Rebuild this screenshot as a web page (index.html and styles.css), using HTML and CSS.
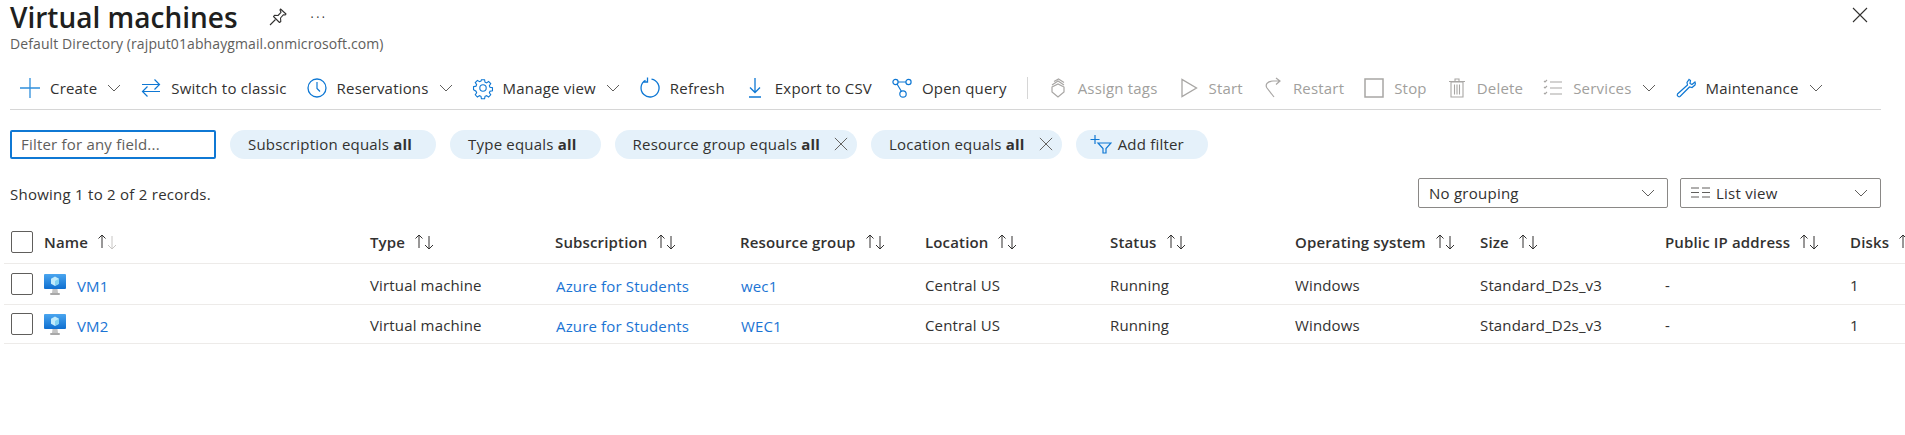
FILE: index.html
```html
<!DOCTYPE html>
<html lang="en">
<head>
    <meta charset="UTF-8">
    <meta name="viewport" content="width=device-width, initial-scale=1.0">
    <title>Virtual machines</title>
    <link rel="stylesheet" href="styles.css">
</head>
<body>

    <svg class="defs" aria-hidden="true">
        <defs>
            <linearGradient id="vmblue" x1="0" y1="0" x2="0" y2="1">
                <stop offset="0" stop-color="#4aa5ef"/>
                <stop offset="1" stop-color="#0f6fd0"/>
            </linearGradient>
        </defs>
        <symbol id="chev" viewBox="0 0 14 14"><path d="M1 4l6 6 6-6" fill="none" stroke="currentColor" stroke-width="1"/></symbol>
        <symbol id="cross" viewBox="0 0 16 16"><path d="M1 1l14 14M15 1L1 15" fill="none" stroke="currentColor" stroke-width="1.1"/></symbol>
        <symbol id="sort" viewBox="0 0 22 18">
            <path d="M5 15V2M1.500 5.500L5 2l3.500 3.500" fill="none" stroke="#323130" stroke-width="1"/>
            <path d="M15 3v13M11 12l4 4 4-4" fill="none" stroke="currentColor" stroke-width="1"/>
        </symbol>
        <symbol id="vm" viewBox="0 0 22 22">
            <rect x="0" y="0" width="22" height="15" rx="1" fill="url(#vmblue)"/>
            <path d="M11 2.500l4 2.200v5L11 12l-4-2.300v-5z" fill="#c2ebfb"/>
            <path d="M11 7l4-2.300v5L11 12z" fill="#83d3f3"/>
            <path d="M8.500 15h5l.5 4h-6z" fill="#c4c4c4"/>
            <rect x="6" y="19" width="10" height="2" rx="1" fill="#a8a8a8"/>
        </symbol>
    </svg>

    <header class="page-head">
        <div class="title-block">
            <div class="title-line">
                <h1>Virtual machines</h1>
                <svg class="pin" viewBox="0 0 18 18"><path d="M11.500 1l5.500 5-1 1-1.500-.3-3 3.300.3 3.500-1.300 1-6-6 1-1.200 3.500.2 3-3.200L11 2z" fill="none" stroke="#323130" stroke-width="1.100" stroke-linejoin="round"/><path d="M6.500 11.500L1 17" fill="none" stroke="#323130" stroke-width="1.100"/></svg>
                <span class="more">&middot;&middot;&middot;</span>
            </div>
            <p class="subtitle">Default Directory (rajput01abhaygmail.onmicrosoft.com)</p>
        </div>
        <svg class="close"><use href="#cross"/></svg>
    </header>

    <nav class="toolbar">
        <button class="tool">
            <svg class="icon" viewBox="0 0 20 20"><path d="M10 0v20M0 10h20" fill="none" stroke="#2f8fdc" stroke-width="1.300"/></svg>
            Create
            <svg class="chev"><use href="#chev"/></svg>
        </button>
        <button class="tool">
            <svg class="icon" viewBox="0 0 20 20"><path d="M1 6.500h17M13.500 1.500l5 5-5 5M19 13.500H2M6.500 8.500l-5 5 5 5" fill="none" stroke="#0f78d4" stroke-width="1.200"/></svg>
            Switch to classic
        </button>
        <button class="tool">
            <svg class="icon" viewBox="0 0 20 20"><circle cx="10" cy="10" r="9" fill="none" stroke="#0f78d4" stroke-width="1.300"/><path d="M10 4v6.500l3 3" fill="none" stroke="#0f78d4" stroke-width="1.200"/></svg>
            Reservations
            <svg class="chev"><use href="#chev"/></svg>
        </button>
        <button class="tool">
            <svg class="icon" viewBox="0 0 20 20"><circle cx="10" cy="10" r="3.200" fill="none" stroke="#0f78d4" stroke-width="1.100"/><path d="M8.300 1h3.400l.5 2.700 1.600.7 2.300-1.500 2.300 2.400-1.500 2.200.7 1.700 2.700.5v3.300l-2.700.5-.7 1.700 1.500 2.200-2.300 2.400-2.300-1.500-1.600.7-.5 2.700H8.300l-.5-2.700-1.600-.7-2.300 1.500-2.300-2.400 1.500-2.200-.7-1.700L-.3 11.800V8.500l2.700-.5.7-1.700-1.500-2.200 2.300-2.400 2.300 1.500 1.600-.7z" transform="translate(.8 .8) scale(.92)" fill="none" stroke="#0f78d4" stroke-width="1.200"/></svg>
            Manage view
            <svg class="chev"><use href="#chev"/></svg>
        </button>
        <button class="tool">
            <svg class="icon" viewBox="0 0 20 20"><path d="M11.500 1.100A9 9 0 1 1 5.500 2.200M7.500 -.5v4.500H3" fill="none" stroke="#0f78d4" stroke-width="1.300"/></svg>
            Refresh
        </button>
        <button class="tool">
            <svg class="icon" viewBox="0 0 20 20"><path d="M10 0v14M5 9.500l5 5 5-5M4 19h12" fill="none" stroke="#0f78d4" stroke-width="1.300"/></svg>
            Export to CSV
        </button>
        <button class="tool">
            <svg class="icon" viewBox="0 0 20 20"><g fill="none" stroke="#0f78d4" stroke-width="1.200"><circle cx="3.500" cy="4" r="2.600"/><circle cx="16.500" cy="4" r="2.600"/><circle cx="11" cy="16" r="3.200"/><path d="M6 4h8M5 6l4.500 7.500"/></g></svg>
            Open query
        </button>
        <span class="tool-sep"></span>
        <button class="tool off">
            <svg class="icon" viewBox="0 0 20 20"><path d="M4 9l6-3 6 3v5l-6 5-6-5zM4 7l6-4 6 4M6 3.500L10.500 1 16 4.500" fill="none" stroke="#a8a6a4" stroke-width="1.200"/></svg>
            Assign tags
        </button>
        <button class="tool off tool-wide">
            <svg class="icon" viewBox="0 0 20 20"><path d="M3 1.500v17L17.500 10z" fill="none" stroke="#a8a6a4" stroke-width="1.300"/></svg>
            Start
        </button>
        <button class="tool off">
            <svg class="icon" viewBox="0 0 20 20"><path d="M11 19L4 10c-2-3 0-7 6-7h6M13 0l4 3-4 3.500" fill="none" stroke="#a8a6a4" stroke-width="1.200"/></svg>
            Restart
        </button>
        <button class="tool off">
            <svg class="icon" viewBox="0 0 20 20"><rect x="1" y="1" width="18" height="18" fill="none" stroke="#a8a6a4" stroke-width="1.500"/></svg>
            Stop
        </button>
        <button class="tool off">
            <svg class="icon" viewBox="0 0 20 20"><path d="M4 4h12v15H4zM2 3.500h16M8 3V1h4v2M7.500 6.500v10M10 6.500v10M12.500 6.500v10" fill="none" stroke="#a8a6a4" stroke-width="1.100"/></svg>
            Delete
        </button>
        <button class="tool off">
            <svg class="icon" viewBox="0 0 20 20"><path d="M7 4h12M7 10h12M7 16h12M1 3l1 1 2-2M1 9l1 1 2-2M1 15l1 1 2-2" fill="none" stroke="#a8a6a4" stroke-width="1.100"/></svg>
            Services
            <svg class="chev"><use href="#chev"/></svg>
        </button>
        <button class="tool">
            <svg class="icon" viewBox="0 0 20 20"><path d="M13 1.500l-2 3 .500 2.500L1.500 16c-1 1.500 1 3.500 2.500 2.500L13.500 9l2.500.5 3-2.500c.500-1 .500-2 0-3l-3 2.500-2-1 .500-3c-.500-.500-1-.500-1.500-1z" fill="none" stroke="#0f78d4" stroke-width="1.200"/></svg>
            Maintenance
            <svg class="chev"><use href="#chev"/></svg>
        </button>
    </nav>

    <section class="filters">
        <input class="filter-input" type="text" placeholder="Filter for any field...">
        <span class="pill">Subscription equals <b>all</b></span>
        <span class="pill">Type equals <b>all</b></span>
        <span class="pill pill-x">Resource group equals <b>all</b><svg class="x"><use href="#cross"/></svg></span>
        <span class="pill pill-x">Location equals <b>all</b><svg class="x"><use href="#cross"/></svg></span>
        <span class="pill pill-add"><svg class="add-icon" viewBox="0 0 22 20"><path d="M5 1v9M.5 5.500h9M8 9h13l-5 5.500V19h-3v-4.500z" fill="none" stroke="#0f78d4" stroke-width="1.200"/></svg>Add filter</span>
    </section>

    <section class="summary">
        <span class="records">Showing 1 to 2 of 2 records.</span>
        <div class="selects">
            <div class="select select-group">No grouping<svg class="chev"><use href="#chev"/></svg></div>
            <div class="select select-view">
                <span class="select-label">
                    <svg class="list-icon" viewBox="0 0 20 12"><path d="M0 1h8M0 5.500h8M0 10h8M11 1h8M11 5.500h8M11 10h8" fill="none" stroke="#605e5c" stroke-width="1"/></svg>
                    List view
                </span>
                <svg class="chev"><use href="#chev"/></svg>
            </div>
        </div>
    </section>

    <div class="grid">
        <div class="row row-head">
            <span class="check"></span>
            <span class="col">Name<svg class="sort name-sort"><use href="#sort"/></svg></span>
            <span class="col">Type<svg class="sort"><use href="#sort"/></svg></span>
            <span class="col">Subscription<svg class="sort"><use href="#sort"/></svg></span>
            <span class="col">Resource group<svg class="sort"><use href="#sort"/></svg></span>
            <span class="col">Location<svg class="sort"><use href="#sort"/></svg></span>
            <span class="col">Status<svg class="sort"><use href="#sort"/></svg></span>
            <span class="col">Operating system<svg class="sort"><use href="#sort"/></svg></span>
            <span class="col">Size<svg class="sort"><use href="#sort"/></svg></span>
            <span class="col">Public IP address<svg class="sort"><use href="#sort"/></svg></span>
            <span class="col">Disks<svg class="sort"><use href="#sort"/></svg></span>
        </div>
        <div class="row row-body">
            <span class="check"></span>
            <span class="col"><svg class="vm"><use href="#vm"/></svg><a class="vm-link" href="#">VM1</a></span>
            <span class="col">Virtual machine</span>
            <span class="col"><a href="#">Azure for Students</a></span>
            <span class="col"><a href="#">wec1</a></span>
            <span class="col">Central US</span>
            <span class="col">Running</span>
            <span class="col">Windows</span>
            <span class="col">Standard_D2s_v3</span>
            <span class="col">-</span>
            <span class="col">1</span>
        </div>
        <div class="row row-body row-last">
            <span class="check"></span>
            <span class="col"><svg class="vm"><use href="#vm"/></svg><a class="vm-link" href="#">VM2</a></span>
            <span class="col">Virtual machine</span>
            <span class="col"><a href="#">Azure for Students</a></span>
            <span class="col"><a href="#">WEC1</a></span>
            <span class="col">Central US</span>
            <span class="col">Running</span>
            <span class="col">Windows</span>
            <span class="col">Standard_D2s_v3</span>
            <span class="col">-</span>
            <span class="col">1</span>
        </div>
    </div>

</body>
</html>
```

FILE: styles.css
```css
body {
    margin: 0;
    height: 435px;
    overflow: hidden;
    background: white;
    color: #323130;
    font-family: "Open Sans", "Noto Sans", sans-serif;
    font-size: 15px;
    letter-spacing: .25px;
}

.defs {
    display: block;
    width: 0;
    height: 0;
}

/* title area */
.page-head {
    display: flex;
    justify-content: space-between;
    padding: 0 37px 0 10px;
    height: 71px;
}

.title-line {
    display: flex;
    align-items: center;
    height: 34px;
}

h1 {
    margin: 0;
    font-size: 28px;
    line-height: 34px;
    font-weight: 600;
    letter-spacing: 0;
    color: #201f1e;
}

.pin {
    width: 18px;
    height: 18px;
    margin-left: 31px;
}

.more {
    margin-left: 24px;
    font-size: 12px;
    letter-spacing: 2.500px;
}

.subtitle {
    margin: 0;
    font-size: 14px;
    letter-spacing: .1px;
    color: #605e5c;
}

.close {
    width: 16px;
    height: 16px;
    margin-top: 7px;
}

/* toolbar */
.toolbar {
    display: flex;
    align-items: center;
    gap: 20px;
    height: 34px;
    margin: 0 24px 0 10px;
    padding: 0 0 4px 10px;
    border-bottom: 1px solid #d6d6d6;
    letter-spacing: .19px;
}

.tool {
    display: flex;
    align-items: center;
    gap: 10px;
    padding: 0;
    border: none;
    background: none;
    color: #323130;
    font: inherit;
    letter-spacing: inherit;
    white-space: nowrap;
}

.tool.off {
    color: #a19f9d;
}

.tool-wide {
    margin-left: 1px;
}

.icon {
    width: 20px;
    height: 20px;
    overflow: visible;
}

.chev {
    width: 14px;
    height: 14px;
    color: #605e5c;
}

.tool-sep {
    width: 1px;
    height: 22px;
    background: #d6d6d6;
}

/* filter pills */
.filters {
    display: flex;
    align-items: center;
    gap: 14px;
    margin: 20px 0 0 10px;
    letter-spacing: .2px;
}

.filter-input {
    box-sizing: border-box;
    width: 206px;
    height: 29px;
    padding: 0 9px 2px;
    border: 2px solid #0f78d4;
    border-radius: 2px;
    outline: none;
    font: inherit;
    letter-spacing: inherit;
}

.filter-input::placeholder {
    color: #605e5c;
}

.pill {
    box-sizing: border-box;
    display: flex;
    align-items: center;
    height: 29px;
    padding: 0 24px 2px 18px;
    border-radius: 15px;
    background: #e5f1fa;
    white-space: pre;
}

.pill b {
    font-weight: 700;
}

.pill-x {
    padding-right: 9px;
}

.x {
    width: 14px;
    height: 14px;
    margin-left: 14px;
    color: #605e5c;
}

.pill-add {
    padding-left: 14px;
}

.add-icon {
    width: 22px;
    height: 20px;
    margin-right: 6px;
}

/* records line and dropdowns */
.summary {
    display: flex;
    justify-content: space-between;
    align-items: center;
    margin: 19px 24px 0 10px;
}

.records {
    padding-top: 2px;
}

.selects {
    display: flex;
    gap: 12px;
}

.select {
    box-sizing: border-box;
    display: flex;
    justify-content: space-between;
    align-items: center;
    height: 30px;
    padding: 0 12px 0 10px;
    border: 1px solid #8a8886;
    border-radius: 2px;
}

.select-group {
    width: 250px;
}

.select-view {
    width: 201px;
}

.select-label {
    display: flex;
    align-items: center;
    gap: 5px;
}

.list-icon {
    width: 20px;
    height: 12px;
}

/* table */
.grid {
    margin: 13px 0 0 4px;
    overflow: hidden;
    letter-spacing: .15px;
}

.row {
    display: grid;
    grid-template-columns: 33px 326px repeat(9, 185px);
    align-items: center;
    height: 40px;
    padding-left: 7px;
    border-bottom: 1px solid #edebe9;
}

.row-head {
    height: 42px;
    font-weight: 600;
}

.row-last {
    height: 38px;
}

.row-body .col {
    padding-top: 2px;
}

.check {
    box-sizing: border-box;
    width: 22px;
    height: 22px;
    border: 1px solid #605e5c;
    border-radius: 2px;
}

.col {
    display: flex;
    align-items: center;
    white-space: nowrap;
}

.sort {
    width: 22px;
    height: 18px;
    margin-left: 9px;
    color: #323130;
}

.name-sort {
    color: #c8c6c4;
}

.vm {
    width: 22px;
    height: 22px;
}

.vm-link {
    margin-left: 11px;
}

a {
    margin-left: 1px;
    padding-top: 2px;
    color: #1b74d4;
    text-decoration: none;
}
```
